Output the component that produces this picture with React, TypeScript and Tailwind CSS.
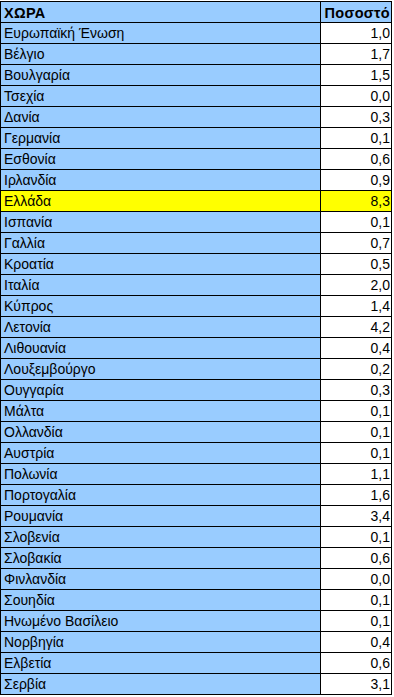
import React from "react";

const rows: [string, string][] = [
  ["Ευρωπαϊκή Ένωση", "1,0"],
  ["Βέλγιο", "1,7"],
  ["Βουλγαρία", "1,5"],
  ["Τσεχία", "0,0"],
  ["Δανία", "0,3"],
  ["Γερμανία", "0,1"],
  ["Εσθονία", "0,6"],
  ["Ιρλανδία", "0,9"],
  ["Ελλάδα", "8,3"],
  ["Ισπανία", "0,1"],
  ["Γαλλία", "0,7"],
  ["Κροατία", "0,5"],
  ["Ιταλία", "2,0"],
  ["Κύπρος", "1,4"],
  ["Λετονία", "4,2"],
  ["Λιθουανία", "0,4"],
  ["Λουξεμβούργο", "0,2"],
  ["Ουγγαρία", "0,3"],
  ["Μάλτα", "0,1"],
  ["Ολλανδία", "0,1"],
  ["Αυστρία", "0,1"],
  ["Πολωνία", "1,1"],
  ["Πορτογαλία", "1,6"],
  ["Ρουμανία", "3,4"],
  ["Σλοβενία", "0,1"],
  ["Σλοβακία", "0,6"],
  ["Φινλανδία", "0,0"],
  ["Σουηδία", "0,1"],
  ["Ηνωμένο Βασίλειο", "0,1"],
  ["Νορβηγία", "0,4"],
  ["Ελβετία", "0,6"],
  ["Σερβία", "3,1"],
];

export default function App() {
  return (
    <div
      className="w-[394px] h-[697px] bg-white overflow-hidden text-black"
      style={{ fontFamily: '"Liberation Sans", Arial, sans-serif' }}
    >
      <div className="mt-px w-[392px] border-l border-t border-black">
        <div className="flex h-[21px] border-b border-black font-bold text-[14.5px] tracking-[0.3px]">
          <div className="w-[320px] border-r border-black bg-[#99ccff] pl-[3px] leading-[22px]">
            ΧΩΡΑ
          </div>
          <div className="w-[71px] border-r border-black bg-[#99ccff] pr-[1px] text-right leading-[22px]">
            Ποσοστό
          </div>
        </div>
        {rows.map(([name, val]) => {
          const hl = name === "Ελλάδα";
          return (
            <div key={name} className="flex h-[21px] border-b border-black text-[14px]">
              <div
                className={
                  hl
                    ? "w-[320px] border-r border-black bg-[#ffff00] pl-[3px] leading-[21px]"
                    : "w-[320px] border-r border-black bg-[#99ccff] pl-[3px] leading-[21px]"
                }
              >
                {name}
              </div>
              <div
                className={
                  hl
                    ? "w-[71px] border-r border-black bg-[#ffff00] pr-[1px] text-right leading-[21px]"
                    : "w-[71px] border-r border-black bg-white pr-[1px] text-right leading-[21px]"
                }
              >
                {val}
              </div>
            </div>
          );
        })}
      </div>
    </div>
  );
}
